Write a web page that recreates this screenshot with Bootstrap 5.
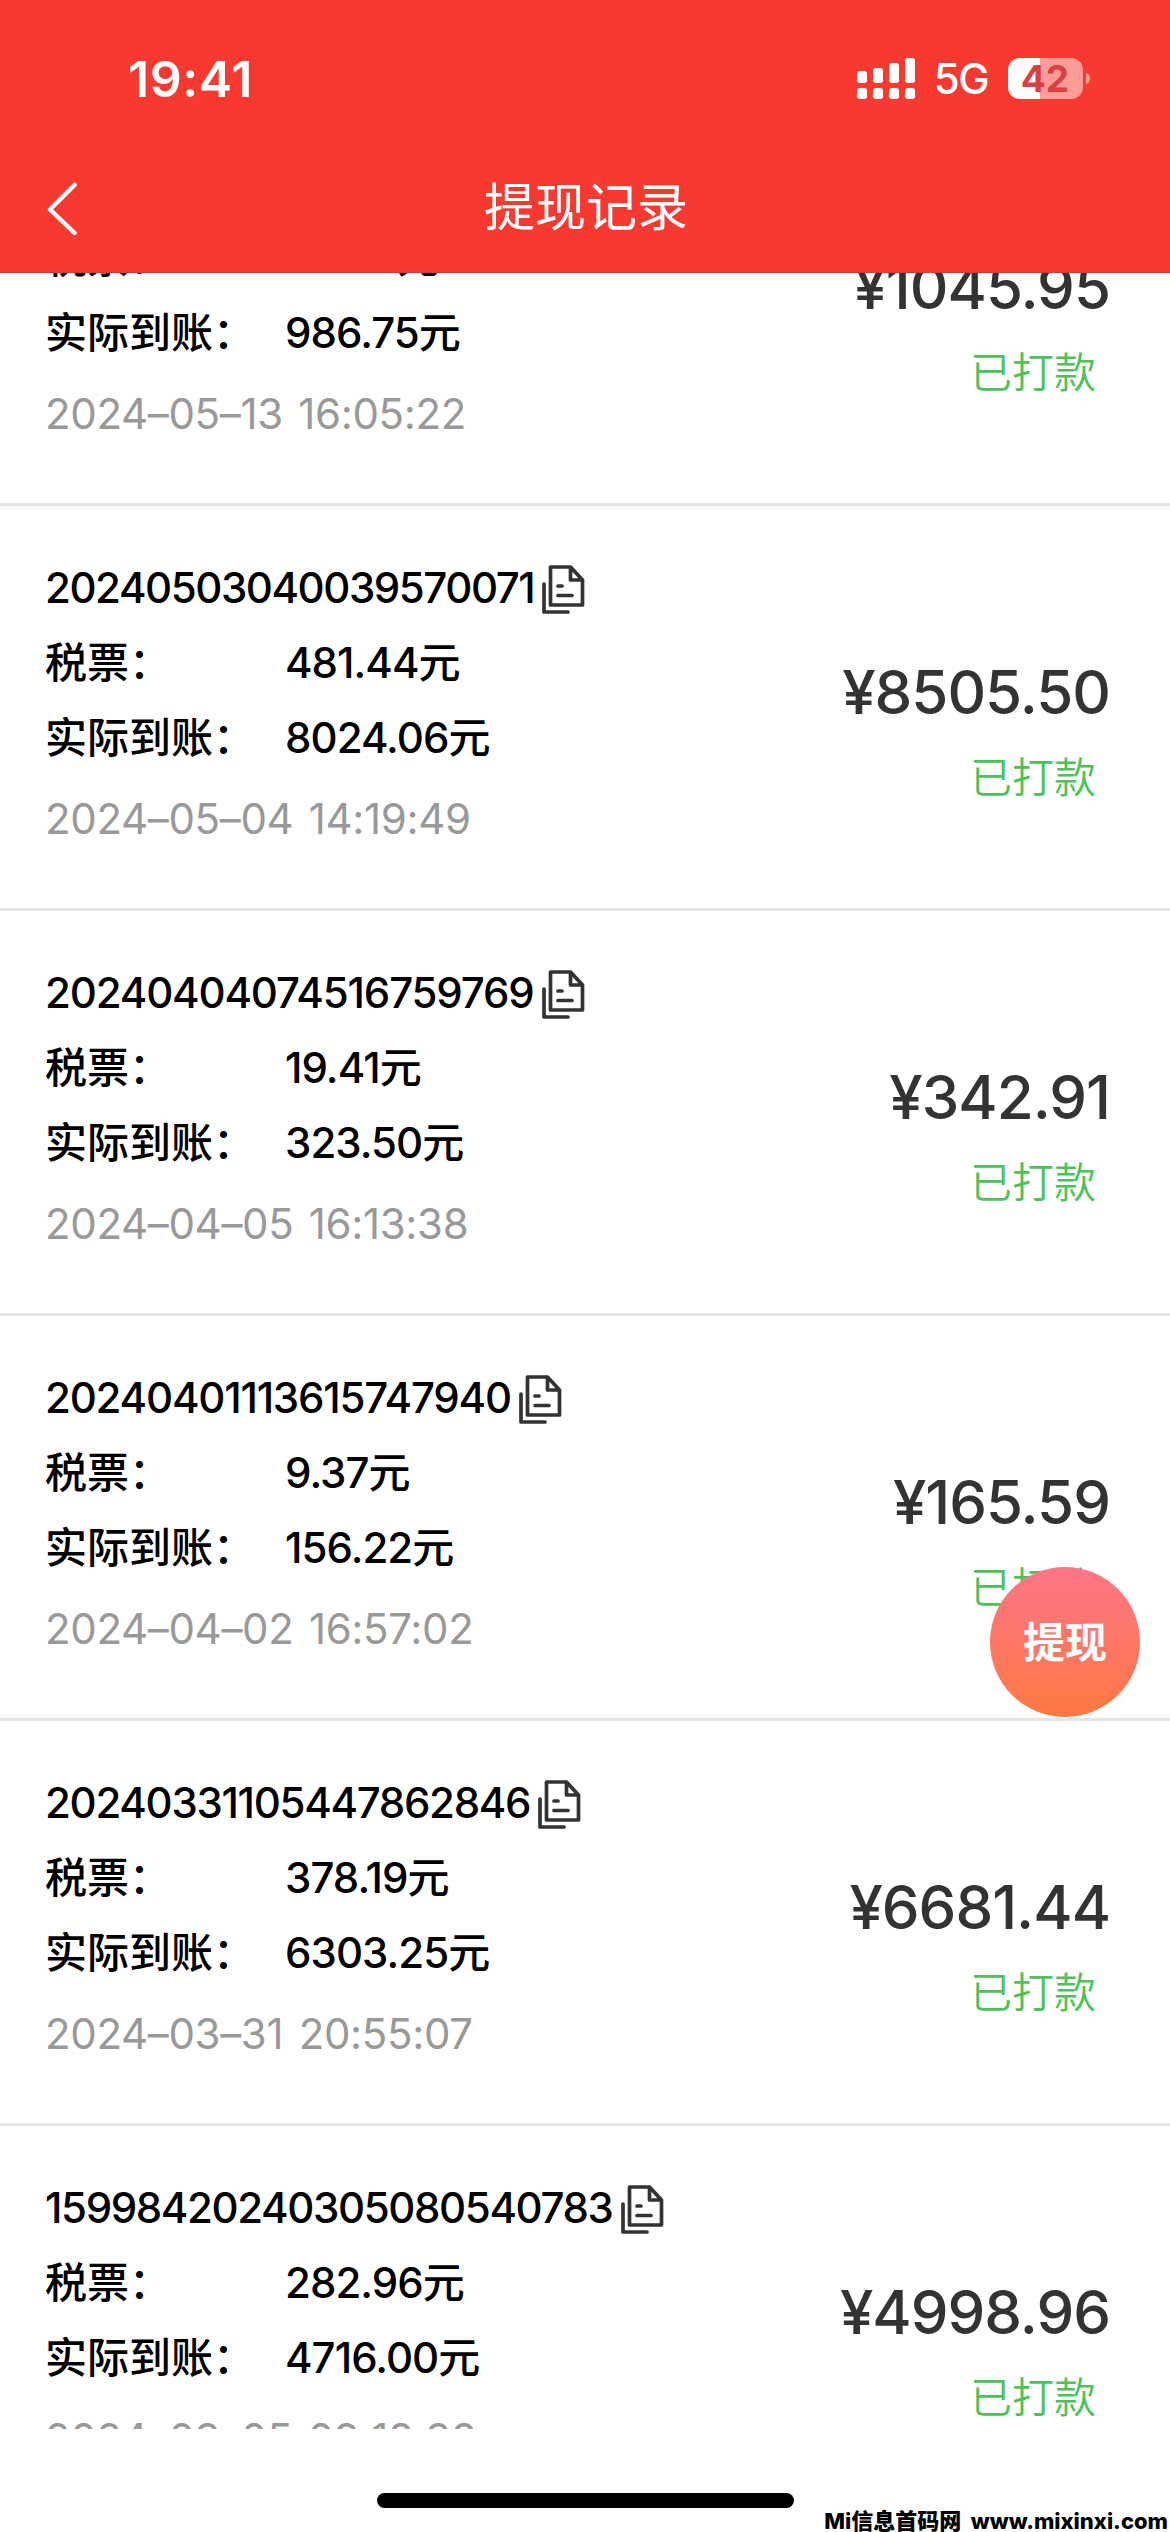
<!DOCTYPE html>
<html lang="zh-CN">
<head>
<meta charset="utf-8">
<meta name="viewport" content="width=device-width, initial-scale=1">
<title>提现记录</title>
<link href="https://cdn.jsdelivr.net/npm/bootstrap@5.3.0/dist/css/bootstrap.min.css" rel="stylesheet">
<style>
  body { font-family: Inter, "Noto Sans CJK SC", sans-serif; background: #fff; color: #000; }
  .screen { width: 1170px; height: 2532px; }
  .app-head { height: 273px; background: #f8392f; border-bottom: 1px solid #c8403a; }
  .status-bar { height: 157px; padding: 0 79px 0 128px; }
  .clock { font-size: 50px; font-weight: 600; line-height: 60px; letter-spacing: .6px; }
  .net { font-size: 42px; font-weight: 500; line-height: 50px; margin: 0 20px 0 19px; letter-spacing: -1.6px; }
  .title-bar { height: 101px; padding: 0 45px; }
  .title-bar h1 { font-size: 51px; font-weight: 400; line-height: 101px; }
  .list-view { height: 2156px; }
  .record { height: 405px; padding: 44px 60px 0 45px; border-bottom: 3px solid #e5e5e5; }
  .record-first { height: 330px; margin-top: -97px; }
  .record-first .sum { padding-top: 17px; }
  .line { height: 75px; line-height: 75px; font-size: 42px; font-weight: 500; white-space: nowrap; }
  .order-no { letter-spacing: -1.3px; }
  .record:nth-child(2) .order-no { letter-spacing: -1.44px; }
  .record:nth-child(3) .order-no { letter-spacing: -1.16px; }
  .record:nth-child(4) .order-no { letter-spacing: -1.2px; }
  .record:nth-child(6) .order-no { letter-spacing: -1.38px; }
  .copy-icon { margin: 3px 0 0 8px; }
  .line .lbl { width: 240px; }
  .line .val { letter-spacing: -.95px; }
  .stamp { height: 88px; line-height: 88px; font-size: 42px; color: #999; letter-spacing: -.35px; word-spacing: 4px; white-space: nowrap; }
  .sum { padding-top: 92px; }
  .amount { font-size: 60px; line-height: 100px; font-weight: 500; color: #333; letter-spacing: -1px; }
  .state { font-size: 42px; line-height: 72px; font-weight: 350; color: #4cc35a; padding-right: 14px; }
  .fab { left: 990px; top: 1567px; width: 150px; height: 150px; font-size: 42px; font-weight: 600; background: linear-gradient(#fd7588, #ff7842); }
  .home-bar { width: 417px; height: 15px; margin-top: 64px; background: #000; border-radius: 8px; }
  .site-mark { right: 2px; bottom: 0; font-size: 22px; line-height: 22px; font-weight: 800; white-space: pre; }
</style>
</head>
<body>
<svg width="0" height="0" class="d-none">
  <symbol id="copy" viewBox="0 0 44 50">
    <path d="M8.500 3H28.500L40.500 16V41H8.500ZM28.500 3V16H40.500M2 20V48H26M16 22H20M16 31.500H30" fill="none" stroke="#333" stroke-width="3.700" stroke-linecap="round" stroke-linejoin="round"/>
  </symbol>
</svg>
<div class="screen position-relative overflow-hidden d-flex flex-column">
  <header class="app-head text-white flex-shrink-0">
    <div class="status-bar d-flex align-items-center">
      <span class="clock me-auto">19:41</span>
      <svg width="58" height="42" viewBox="0 0 58 42" fill="#fff">
        <rect y="13" width="10" height="12" rx="3"/><rect x="16" y="10" width="10" height="15" rx="3"/><rect x="32" y="5" width="10" height="20" rx="3"/><rect x="48" width="10" height="25" rx="3"/>
        <rect y="30" width="10" height="11" rx="3"/><rect x="16" y="30" width="10" height="11" rx="3"/><rect x="32" y="30" width="10" height="11" rx="3"/><rect x="48" y="30" width="10" height="11" rx="3"/>
      </svg>
      <span class="net">5G</span>
      <svg width="83" height="42" viewBox="0 0 83 42">
        <rect width="75" height="41" rx="12" fill="#fb9c97"/>
        <path d="M12 0H32V41H12A12 12 0 0 1 0 29V12A12 12 0 0 1 12 0Z" fill="#fff"/>
        <path d="M78 15Q82 16 82 20.500T78 26Z" fill="#fb9c97"/>
        <text x="37" y="34" text-anchor="middle" font-family="Inter" font-size="37" font-weight="700" fill="#d93f43">42</text>
      </svg>
    </div>
    <div class="title-bar d-flex align-items-center">
      <svg width="34" height="54" viewBox="0 0 34 54"><path d="M29.500 4L5 28.500L29.500 52" fill="none" stroke="#fff" stroke-width="4.500" stroke-linecap="round" stroke-linejoin="round"/></svg>
      <h1 class="flex-grow-1 text-center m-0 pe-4 me-2">提现记录</h1>
    </div>
  </header>

  <main class="list-view overflow-hidden flex-shrink-0">
    <section class="record record-first d-flex justify-content-between">
      <div>
        <div class="line d-flex"><span class="lbl">税票：</span><span class="val">59.20元</span></div>
        <div class="line d-flex"><span class="lbl">实际到账：</span><span class="val">986.75元</span></div>
        <div class="stamp">2024–05–13 16:05:22</div>
      </div>
      <div class="sum text-end"><div class="amount">¥1045.95</div><div class="state">已打款</div></div>
    </section>
    <section class="record d-flex justify-content-between">
      <div>
        <div class="line d-flex align-items-center"><span class="order-no">20240503040039570071</span><svg class="copy-icon" width="44" height="50"><use href="#copy"/></svg></div>
        <div class="line d-flex"><span class="lbl">税票：</span><span class="val">481.44元</span></div>
        <div class="line d-flex"><span class="lbl">实际到账：</span><span class="val">8024.06元</span></div>
        <div class="stamp">2024–05–04 14:19:49</div>
      </div>
      <div class="sum text-end"><div class="amount">¥8505.50</div><div class="state">已打款</div></div>
    </section>
    <section class="record d-flex justify-content-between">
      <div>
        <div class="line d-flex align-items-center"><span class="order-no">20240404074516759769</span><svg class="copy-icon" width="44" height="50"><use href="#copy"/></svg></div>
        <div class="line d-flex"><span class="lbl">税票：</span><span class="val">19.41元</span></div>
        <div class="line d-flex"><span class="lbl">实际到账：</span><span class="val">323.50元</span></div>
        <div class="stamp">2024–04–05 16:13:38</div>
      </div>
      <div class="sum text-end"><div class="amount">¥342.91</div><div class="state">已打款</div></div>
    </section>
    <section class="record d-flex justify-content-between">
      <div>
        <div class="line d-flex align-items-center"><span class="order-no">20240401113615747940</span><svg class="copy-icon" width="44" height="50"><use href="#copy"/></svg></div>
        <div class="line d-flex"><span class="lbl">税票：</span><span class="val">9.37元</span></div>
        <div class="line d-flex"><span class="lbl">实际到账：</span><span class="val">156.22元</span></div>
        <div class="stamp">2024–04–02 16:57:02</div>
      </div>
      <div class="sum text-end"><div class="amount">¥165.59</div><div class="state">已打款</div></div>
    </section>
    <section class="record d-flex justify-content-between">
      <div>
        <div class="line d-flex align-items-center"><span class="order-no">20240331105447862846</span><svg class="copy-icon" width="44" height="50"><use href="#copy"/></svg></div>
        <div class="line d-flex"><span class="lbl">税票：</span><span class="val">378.19元</span></div>
        <div class="line d-flex"><span class="lbl">实际到账：</span><span class="val">6303.25元</span></div>
        <div class="stamp">2024–03–31 20:55:07</div>
      </div>
      <div class="sum text-end"><div class="amount">¥6681.44</div><div class="state">已打款</div></div>
    </section>
    <section class="record d-flex justify-content-between">
      <div>
        <div class="line d-flex align-items-center"><span class="order-no">15998420240305080540783</span><svg class="copy-icon" width="44" height="50"><use href="#copy"/></svg></div>
        <div class="line d-flex"><span class="lbl">税票：</span><span class="val">282.96元</span></div>
        <div class="line d-flex"><span class="lbl">实际到账：</span><span class="val">4716.00元</span></div>
        <div class="stamp">2024–03–05 09:18:38</div>
      </div>
      <div class="sum text-end"><div class="amount">¥4998.96</div><div class="state">已打款</div></div>
    </section>
  </main>

  <div class="home-bar mx-auto flex-shrink-0"></div>

  <button type="button" class="fab btn border-0 rounded-circle position-absolute p-0 text-white">提现</button>
  <div class="site-mark position-absolute">Mi信息首码网  www.mixinxi.com</div>
</div>
<script src="https://cdn.jsdelivr.net/npm/bootstrap@5.3.0/dist/js/bootstrap.bundle.min.js"></script>
</body>
</html>
